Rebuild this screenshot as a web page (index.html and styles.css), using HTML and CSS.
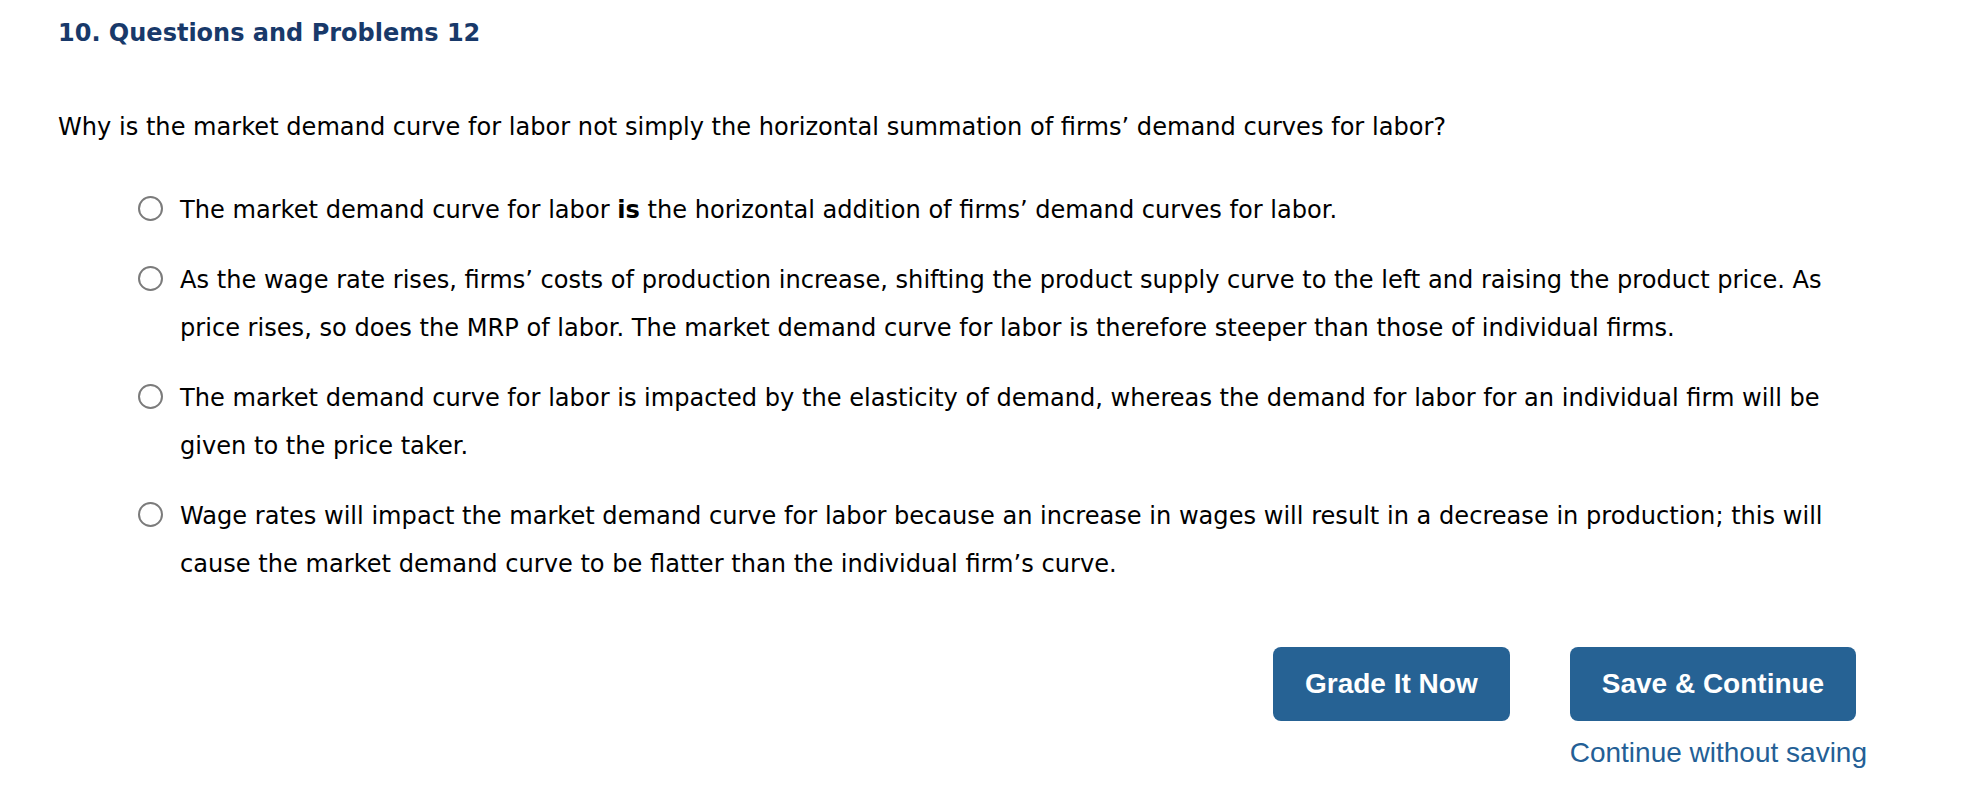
FILE: index.html
```html
<!DOCTYPE html>
<html lang="en">
<head>
<meta charset="utf-8">
<title>10. Questions and Problems 12</title>
<link rel="stylesheet" href="styles.css">
</head>
<body>
<main class="page">
  <h1 class="title">10. Questions and Problems 12</h1>
  <p class="question">Why is the market demand curve for labor not simply the horizontal summation of firms’ demand curves for labor?</p>
  <div class="options">
    <label class="option">
      <input class="radio" type="radio" name="q10">
      <span class="option-text">The market demand curve for labor <b>is</b> the horizontal addition of firms’ demand curves for labor.</span>
    </label>
    <label class="option">
      <input class="radio" type="radio" name="q10">
      <span class="option-text">As the wage rate rises, firms’ costs of production increase, shifting the product supply curve to the left and raising the product price. As price rises, so does the MRP of labor. The market demand curve for labor is therefore steeper than those of individual firms.</span>
    </label>
    <label class="option">
      <input class="radio" type="radio" name="q10">
      <span class="option-text">The market demand curve for labor is impacted by the elasticity of demand, whereas the demand for labor for an individual firm will be given to the price taker.</span>
    </label>
    <label class="option">
      <input class="radio" type="radio" name="q10">
      <span class="option-text">Wage rates will impact the market demand curve for labor because an increase in wages will result in a decrease in production; this will cause the market demand curve to be flatter than the individual firm’s curve.</span>
    </label>
  </div>
  <div class="actions">
    <button class="btn" type="button">Grade It Now</button>
    <div class="save-col">
      <button class="btn" type="button">Save &amp; Continue</button>
      <a class="skip-link" href="#">Continue without saving</a>
    </div>
  </div>
</main>
</body>
</html>
```

FILE: styles.css
```css
html, body {
  margin: 0;
  padding: 0;
  background: #ffffff;
}

.page {
  padding: 15px 121px 0 58px;
  font-family: "DejaVu Sans", Verdana, sans-serif;
  font-size: 24.1px;
  color: #000000;
}

.title {
  margin: 0;
  font-size: 24px;
  line-height: 36px;
  font-weight: bold;
  color: #18396a;
}

.question {
  margin: 58px 0 0 0;
  line-height: 36px;
}

.options {
  margin: 41px 0 0 80px;
  display: flex;
  flex-direction: column;
  gap: 22px;
}

.option {
  display: flex;
  align-items: flex-start;
  gap: 17px;
  line-height: 48px;
  cursor: pointer;
}

.radio {
  appearance: none;
  -webkit-appearance: none;
  flex: 0 0 auto;
  width: 25px;
  height: 25px;
  margin: 10px 0 0 0;
  border: 2px solid #7b7b7b;
  border-radius: 50%;
  background: #ffffff;
  box-sizing: border-box;
}

.option-text b {
  font-weight: bold;
}

.actions {
  margin-top: 59px;
  display: flex;
  justify-content: flex-end;
  align-items: flex-start;
  gap: 60px;
}

.save-col {
  display: flex;
  flex-direction: column;
  align-items: flex-start;
}

.btn {
  height: 74px;
  padding: 0 32px;
  border: none;
  border-radius: 8px;
  background: #266294;
  color: #ffffff;
  font-family: "Liberation Sans", Arial, Helvetica, sans-serif;
  font-weight: bold;
  font-size: 28px;
  line-height: 74px;
  cursor: pointer;
}

.skip-link {
  margin-top: 16px;
  font-family: "Liberation Sans", Arial, Helvetica, sans-serif;
  font-size: 28px;
  line-height: 32px;
  color: #245f96;
  text-decoration: none;
}
```
